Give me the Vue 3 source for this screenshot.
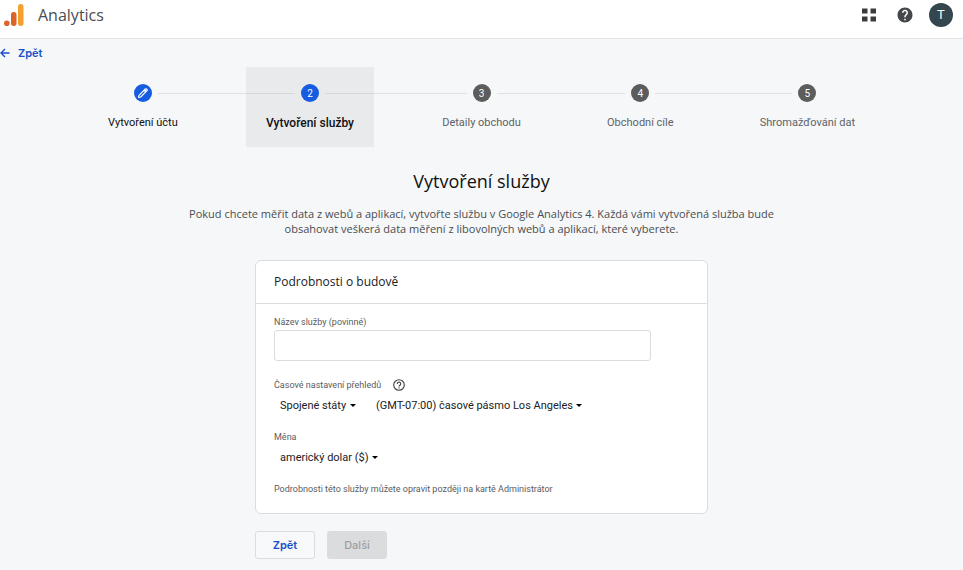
<script setup>
import { ref } from 'vue'

const steps = [
  { label: 'Vytvoření účtu', state: 'done' },
  { label: 'Vytvoření služby', state: 'active' },
  { label: 'Detaily obchodu', state: 'next' },
  { label: 'Obchodní cíle', state: 'next' },
  { label: 'Shromažďování dat', state: 'next' },
]

const propertyName = ref('')
const country = ref('Spojené státy')
const zone = ref('(GMT-07:00) časové pásmo Los Angeles')
const currency = ref('americký dolar ($)')
</script>

<template>
  <div class="page">
    <header class="topbar">
      <a class="brand" href="#">
        <svg class="logo" viewBox="0 0 20 24" aria-hidden="true">
          <rect x="14" y="1" width="5.500" height="22" rx="2.700" fill="#f4a02f" />
          <rect x="7" y="9" width="5.500" height="14" rx="2.700" fill="#dc6329" />
          <circle cx="2.800" cy="20.200" r="2.800" fill="#dc6329" />
        </svg>
        <span>Analytics</span>
      </a>
      <div class="tools">
        <button class="tool" type="button" aria-label="Aplikace">
          <svg width="14" height="14" viewBox="0 0 14 14" fill="#3c3c3c">
            <path d="M0 0.500h5.500v5H0zM8.500 0.500H14v5H8.500zM0 8.500h5.500v5H0zM8.500 8.500H14v5H8.500z" />
          </svg>
        </button>
        <button class="tool" type="button" aria-label="Nápověda">
          <svg width="18" height="18" viewBox="0 0 24 24" fill="#45484b">
            <path d="M12 2C6.480 2 2 6.480 2 12s4.480 10 10 10 10-4.480 10-10S17.520 2 12 2zm1 17h-2v-2h2v2zm2.070-7.750l-.9.920C13.450 12.900 13 13.500 13 15h-2v-.5c0-1.100.450-2.100 1.170-2.830l1.240-1.260c.370-.360.590-.860.590-1.410 0-1.100-.9-2-2-2s-2 .9-2 2H8c0-2.210 1.790-4 4-4s4 1.790 4 4c0 .880-.360 1.680-.930 2.250z" />
          </svg>
        </button>
        <button class="avatar" type="button">T</button>
      </div>
    </header>

    <a class="back" href="#">
      <svg width="10" height="10" viewBox="0 0 10 10" fill="none" stroke="currentColor" stroke-width="1.400" aria-hidden="true">
        <path d="M9.500 5H1.200M5 1L1 5l4 4" />
      </svg>
      <span>Zpět</span>
    </a>

    <ol class="stepper">
      <template v-for="(step, i) in steps" :key="step.label">
        <li v-if="i > 0" class="connector" aria-hidden="true"></li>
        <li class="step" :class="step.state" :aria-current="step.state === 'active' ? 'step' : undefined">
          <div class="track">
            <span class="line" :class="{ hidden: i === 0 }"></span>
            <span class="dot">
              <svg v-if="step.state === 'done'" width="12" height="12" viewBox="0 0 12 12" fill="none" stroke="#fff" stroke-width="1.100" stroke-linejoin="round" aria-hidden="true">
                <path d="M1.500 10.500l.5-2.200 6.300-6.300q.6-.6 1.200 0l.5.5q.6.600 0 1.200L3.700 10z" />
                <path d="M7.300 3l1.700 1.700" stroke-width="1.800" />
              </svg>
              <template v-else>{{ i + 1 }}</template>
            </span>
            <span class="line" :class="{ hidden: i === steps.length - 1 }"></span>
          </div>
          <span class="label">{{ step.label }}</span>
        </li>
      </template>
    </ol>

    <main class="content">
      <h1>Vytvoření služby</h1>
      <p class="intro">
        Pokud chcete měřit data z webů a aplikací, vytvořte službu v Google Analytics 4. Každá vámi vytvořená služba bude
        obsahovat veškerá data měření z libovolných webů a aplikací, které vyberete.
      </p>

      <form class="form" @submit.prevent>
        <section class="card">
          <h2>Podrobnosti o budově</h2>
          <div class="body">
            <label class="caption" for="name">Název služby (povinné)</label>
            <input id="name" v-model="propertyName" class="textbox" type="text" />

            <div class="caption zone-caption">
              <label for="country">Časové nastavení přehledů</label>
              <svg width="12" height="12" viewBox="0 0 12 12" fill="none" stroke="#3c4043" stroke-width="1.100" aria-hidden="true">
                <circle cx="6" cy="6" r="5.300" />
                <path d="M4.300 4.900a1.700 1.700 0 1 1 2.700 1.300c-.6.400-1 .6-1 1.300M6 8.300v1.100" />
              </svg>
            </div>
            <div class="selects">
              <span class="picker">
                <select id="country" v-model="country"><option>Spojené státy</option></select>
                <svg width="6" height="3" viewBox="0 0 6 3" aria-hidden="true"><path d="M0 0h6L3 3z" /></svg>
              </span>
              <span class="picker">
                <select v-model="zone" aria-label="Časové pásmo"><option>(GMT-07:00) časové pásmo Los Angeles</option></select>
                <svg width="6" height="3" viewBox="0 0 6 3" aria-hidden="true"><path d="M0 0h6L3 3z" /></svg>
              </span>
            </div>

            <label class="caption currency-caption" for="currency">Měna</label>
            <div class="selects">
              <span class="picker">
                <select id="currency" v-model="currency"><option>americký dolar ($)</option></select>
                <svg width="6" height="3" viewBox="0 0 6 3" aria-hidden="true"><path d="M0 0h6L3 3z" /></svg>
              </span>
            </div>

            <p class="note">Podrobnosti této služby můžete opravit později na kartě Administrátor</p>
          </div>
        </section>

        <div class="actions">
          <button class="btn" type="button">Zpět</button>
          <button class="btn" type="submit" disabled>Další</button>
        </div>
      </form>
    </main>
  </div>
</template>

<style>
body {
  margin: 0;
  background: #f5f7f9;
}
</style>

<style scoped>
.page {
  font-family: Roboto, "Liberation Sans", sans-serif;
  font-size: 11px;
  color: #202124;
}
.page * {
  box-sizing: border-box;
}
a {
  text-decoration: none;
}
button {
  font: inherit;
  cursor: pointer;
}
.topbar {
  display: flex;
  align-items: flex-start;
  justify-content: space-between;
  height: 39px;
  padding: 2px 10px 0 4px;
  background: #fff;
  border-bottom: 1px solid #e2e4e7;
}
.brand {
  display: flex;
  align-items: center;
  gap: 14px;
  font-family: "Open Sans", sans-serif;
  font-size: 16px;
  line-height: 26px;
  color: #4a4d51;
}
.logo {
  width: 20px;
  height: 24px;
}
.tools {
  display: flex;
  align-items: center;
  gap: 12px;
  height: 26px;
}
.tool {
  display: grid;
  place-items: center;
  width: 24px;
  height: 24px;
  padding: 0;
  border: 0;
  background: none;
}
.avatar {
  width: 24px;
  height: 24px;
  padding: 0;
  border: 0;
  border-radius: 50%;
  background: #34474f;
  color: #fff;
  font-size: 13px;
  line-height: 24px;
}
.back {
  display: inline-flex;
  align-items: center;
  gap: 8px;
  height: 28px;
  color: #174fcb;
  font-family: Inter, sans-serif;
  font-weight: 600;
  font-size: 11px;
}
.stepper {
  display: flex;
  width: 82%;
  max-width: 783px;
  margin: 0 auto;
  padding: 0;
  list-style: none;
}
.connector {
  flex: 1;
  height: 1px;
  margin-top: 26px;
  background: #dfe1e3;
}
.step {
  height: 80px;
  padding-top: 17px;
  color: #606366;
}
.track {
  display: flex;
  align-items: flex-start;
  gap: 6px;
}
.line {
  flex: 1;
  height: 1px;
  margin-top: 9px;
  background: #dfe1e3;
}
.line.hidden {
  visibility: hidden;
}
.dot {
  display: grid;
  place-items: center;
  width: 18px;
  height: 18px;
  border-radius: 50%;
  background: #5c5c5c;
  color: #fff;
  font-size: 10px;
}
.label {
  display: block;
  padding: 0 18px;
  margin-top: 13px;
  font-size: 11px;
  line-height: 16px;
  white-space: nowrap;
}
.done,
.active {
  color: #111;
}
.done .dot,
.active .dot {
  background: #165ce0;
}
.active {
  background: #e9eaec;
}
.active .line {
  background: #d5d6d8;
}
.active .label {
  padding: 0 20px;
  font-size: 12px;
  font-weight: 500;
}
.content {
  padding: 0 16px;
}
h1 {
  margin: 21px 0 12px;
  font-family: "Open Sans", sans-serif;
  font-weight: 400;
  font-size: 18px;
  line-height: 26px;
  text-align: center;
  color: #111;
}
.intro {
  max-width: 612px;
  margin: 0 auto;
  font-family: "Open Sans", sans-serif;
  font-weight: 500;
  font-size: 11px;
  line-height: 15px;
  text-align: center;
  color: #4a4d51;
}
.form {
  max-width: 453px;
  margin: 24px auto 0;
}
.card {
  background: #fff;
  border: 1px solid #dadce0;
  border-radius: 6px;
}
h2 {
  margin: 0;
  padding: 11px 18px;
  border-bottom: 1px solid #dadce0;
  font-family: "Open Sans", sans-serif;
  font-weight: 400;
  font-size: 12px;
  line-height: 20px;
  color: #202124;
}
.body {
  padding: 11px 18px 17px;
}
.caption {
  display: flex;
  align-items: center;
  font-size: 9px;
  line-height: 14px;
  color: #5a5d61;
}
.textbox {
  display: block;
  width: 377px;
  max-width: 100%;
  height: 31px;
  margin-top: 1px;
  padding: 0 8px;
  border: 1px solid #dadce0;
  border-radius: 3px;
  background: #fff;
  font: inherit;
}
.zone-caption {
  gap: 12px;
  margin-top: 17px;
}
.currency-caption {
  margin-top: 16px;
}
.selects {
  display: flex;
  gap: 20px;
  padding: 4px 6px 0;
}
.picker {
  display: flex;
  align-items: center;
  gap: 3px;
}
select {
  appearance: none;
  height: 18px;
  padding: 0;
  border: 0;
  background: none;
  font: inherit;
  font-size: 11px;
  color: #202124;
}
.note {
  margin: 16px 0 0;
  font-size: 9px;
  line-height: 14px;
  color: #5a5d61;
}
.actions {
  display: flex;
  gap: 12px;
  margin-top: 17px;
}
.btn {
  width: 60px;
  height: 28px;
  padding: 0;
  border: 1px solid #dadce0;
  border-radius: 3px;
  background: #f8f9fa;
  color: #174fcb;
  font-family: Inter, sans-serif;
  font-size: 11px;
  font-weight: 600;
}
.btn:disabled {
  background: #dadcdd;
  color: #9c9fa1;
  font-weight: 500;
  cursor: default;
}
</style>
